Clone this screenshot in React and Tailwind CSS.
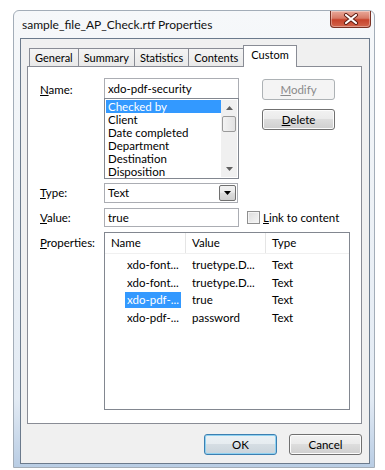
import React from "react";

const U = ({ children }) => <span className="underline underline-offset-[1px]">{children}</span>;

function WinButton({ children, disabled, focused, className = "" }) {
  let cls =
    "flex items-center justify-center w-[73px] h-[21px] rounded-[3px] border text-[11.5px] ";
  if (disabled) {
    cls += "border-[#adb2b5] bg-[#f4f4f4] text-[#8a8a8a]";
  } else if (focused) {
    cls +=
      "border-[#3c7fb1] bg-[linear-gradient(#eaf1f5_0%,#e6ecf0_45%,#d5dde3_50%,#cad4db_100%)] text-black shadow-[inset_0_0_0_1px_#8fd1f0]";
  } else {
    cls +=
      "border-[#707070] bg-[linear-gradient(#f2f2f2_0%,#ebebeb_45%,#dddddd_50%,#cfcfcf_100%)] text-black shadow-[inset_0_0_0_1px_#fcfcfc]";
  }
  return <div className={cls + " " + className}>{children}</div>;
}

const listItems = ["Checked by", "Client", "Date completed", "Department", "Destination", "Disposition"];

const rows = [
  ["xdo-font...", "truetype.D...", "Text"],
  ["xdo-font...", "truetype.D...", "Text"],
  ["xdo-pdf-...", "true", "Text", true],
  ["xdo-pdf-...", "password", "Text"],
];

export default function App() {
  return (
    <div className="w-[385px] h-[470px] bg-white pt-[10px] pl-[13px] font-['Lato',sans-serif] text-[11.5px] text-black overflow-hidden">
      {/* window frame */}
      <div className="w-[362px] h-[458px] flex flex-col rounded-t-[6px] border border-[#a3adb8] bg-[linear-gradient(180deg,#f6f8fa_0%,#eef2f6_40%,#e3ebf4_85%,#b9cde4_100%)]">
        {/* title bar */}
        <div className="h-[27px] flex items-start justify-between pl-[8px]">
          <div className="pt-[6px] text-[12px] leading-[16px] text-[#111]">sample_file_AP_Check.rtf Properties</div>
          <div className="mr-[3px] w-[41px] h-[17px] rounded-b-[4px] border border-t-0 border-[#7a3124] bg-[linear-gradient(180deg,#e9a99a_0%,#d77a66_45%,#c7432b_55%,#d2654c_100%)] flex items-center justify-center shadow-[inset_0_0_0_1px_rgba(255,255,255,0.35)]">
            <svg width="16" height="12" viewBox="0 0 16 12">
              <path d="M3 2 L13 10 M13 2 L3 10" stroke="#5a1a10" strokeWidth="4" strokeLinecap="round" />
              <path d="M3 2 L13 10 M13 2 L3 10" stroke="#ffffff" strokeWidth="2.2" strokeLinecap="round" />
            </svg>
          </div>
        </div>
        {/* client area */}
        <div className="ml-[6px] mr-[4px] h-[426px] border border-[#6b7a8c] bg-[#f0f0f0] flex flex-col pt-[6px] pl-[6px] pr-[7px]">
          {/* tabs */}
          <div className="flex items-end h-[21px] pl-[2px] relative z-10 text-[11px]">
            {["General", "Summary", "Statistics", "Contents"].map((t) => (
              <div
                key={t}
                className="h-[18px] px-[5px] border border-b-0 border-[#898c95] -mr-px flex items-center bg-[linear-gradient(#f4f4f4,#e9e9e9)] leading-none"
              >
                {t}
              </div>
            ))}
            <div className="h-[22px] -mb-px px-[7px] pb-[4px] border border-b-0 border-[#898c95] flex items-center bg-white leading-none">
              Custom
            </div>
          </div>
          {/* panel */}
          <div className="h-[358px] border border-[#898c95] bg-white pl-[12px] pt-[11px] flex flex-col">
            {/* Name row */}
            <div className="flex">
              <div className="w-[64px] pt-[3px]">
                <U>N</U>ame:
              </div>
              <div className="flex flex-col w-[135px]">
                <div className="h-[20px] border border-[#abadb3] border-b-0 px-[3px] flex items-center">xdo-pdf-security</div>
                <div className="h-[81px] border border-[#828790] flex p-[1px]">
                  <div className="flex-1 flex flex-col leading-[13px]">
                    {listItems.map((it, i) => (
                      <div key={it} className={"h-[13px] pl-[2px] " + (i === 0 ? "bg-[#3399ff] text-white" : "")}>
                        {it}
                      </div>
                    ))}
                  </div>
                  <div className="w-[16px] bg-[#f0f0f0] flex flex-col items-center">
                    <div className="h-[16px] flex items-center justify-center">
                      <svg width="7" height="4" viewBox="0 0 7 4"><path d="M0 4 L3.5 0 L7 4Z" fill="#606060" /></svg>
                    </div>
                    <div className="w-[14px] h-[16px] rounded-[2px] border border-[#9a9a9a] bg-[linear-gradient(90deg,#f3f3f3,#e2e2e2)]" />
                    <div className="flex-1" />
                    <div className="h-[16px] flex items-center justify-center">
                      <svg width="7" height="4" viewBox="0 0 7 4"><path d="M0 0 L3.5 4 L7 0Z" fill="#606060" /></svg>
                    </div>
                  </div>
                </div>
              </div>
              <div className="ml-[23px] pt-[1px] flex flex-col gap-[9px]">
                <WinButton disabled>
                  <span><U>M</U>odify</span>
                </WinButton>
                <WinButton>
                  <span><U>D</U>elete</span>
                </WinButton>
              </div>
            </div>
            {/* Type row */}
            <div className="flex mt-[4px] items-center">
              <div className="w-[64px]">
                <U>T</U>ype:
              </div>
              <div className="w-[134px] h-[20px] border border-[#abadb3] flex items-center justify-between pl-[3px] pr-[1px]">
                <span>Text</span>
                <div className="w-[17px] h-[16px] border border-[#707070] rounded-[2px] bg-[linear-gradient(#f2f2f2_0%,#ebebeb_45%,#dddddd_50%,#cfcfcf_100%)] flex items-center justify-center">
                  <svg width="7" height="4" viewBox="0 0 7 4"><path d="M0 0 L3.5 4 L7 0Z" fill="#000" /></svg>
                </div>
              </div>
            </div>
            {/* Value row */}
            <div className="flex mt-[5px] items-center">
              <div className="w-[64px]">
                <U>V</U>alue:
              </div>
              <div className="w-[135px] h-[19px] border border-[#abadb3] flex items-center pl-[3px]">true</div>
              <div className="ml-[8px] w-[13px] h-[13px] border border-[#8f8f8f] bg-[linear-gradient(135deg,#dcdcdc,#f6f6f6)] shadow-[inset_0_0_0_1px_#f4f4f4]" />
              <div className="ml-[3px]">
                <U>L</U>ink to content
              </div>
            </div>
            {/* Properties row */}
            <div className="flex mt-[5px]">
              <div className="w-[64px] pt-[2px]">
                <U>P</U>roperties:
              </div>
              <div className="w-[246px] h-[178px] border border-[#828790] flex flex-col">
                <div className="h-[21px] flex items-center border-b border-[#f0f0f0]">
                  <div className="w-[81px] h-full pl-[6px] flex items-center border-r border-[#e5e5e5]">Name</div>
                  <div className="w-[80px] h-full pl-[6px] flex items-center border-r border-[#e5e5e5]">Value</div>
                  <div className="pl-[6px]">Type</div>
                </div>
                <div className="pt-[2px] flex flex-col">
                  {rows.map((r, i) => (
                    <div key={i} className="h-[17.5px] flex items-center">
                      <div className="w-[81px] pl-[20px] h-full flex items-center">
                        <span className={"h-[16px] px-[2px] flex items-center " + (r[3] ? "bg-[#3399ff] text-white" : "")}>{r[0]}</span>
                      </div>
                      <div className="w-[80px] pl-[6px]">{r[1]}</div>
                      <div className="pl-[6px]">{r[2]}</div>
                    </div>
                  ))}
                </div>
              </div>
            </div>
          </div>
          {/* bottom buttons */}
          <div className="flex justify-end gap-[12px] mt-[10px]">
            <WinButton focused>OK</WinButton>
            <WinButton>Cancel</WinButton>
          </div>
        </div>
      </div>
    </div>
  );
}
